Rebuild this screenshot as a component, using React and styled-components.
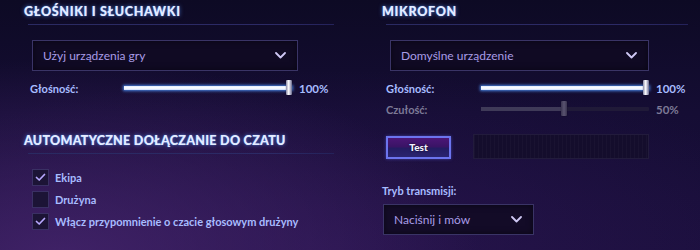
import React from "react";
import styled, { createGlobalStyle } from "styled-components";

const Global = createGlobalStyle`
  html, body { margin: 0; padding: 0; }
  body {
    width: 700px; height: 250px; overflow: hidden;
    font-family: Lato, "Open Sans", "Liberation Sans", sans-serif;
    background: #140d30;
  }
`;

const Page = styled.div`
  width: 700px;
  height: 250px;
  box-sizing: border-box;
  display: grid;
  grid-template-columns: 310px 306px;
  column-gap: 48px;
  padding-left: 24px;
  background:
    radial-gradient(ellipse 420px 200px at 60px 260px, rgba(72, 38, 112, 0.8), rgba(72, 38, 112, 0) 100%),
    radial-gradient(ellipse 500px 180px at 330px 250px, rgba(50, 24, 90, 0.55), rgba(50, 24, 90, 0) 100%),
    linear-gradient(to bottom, #0d0a24 0%, #150d34 45%, #1a0f3c 100%);
`;

const Column = styled.div`
  display: flex;
  flex-direction: column;
  align-items: flex-start;
`;

const Title = styled.h2`
  margin: ${(p) => p.$top || 0}px 0 0;
  font-size: 12.5px;
  font-weight: 900;
  letter-spacing: ${(p) => p.$spacing || 0}px;
  line-height: 24px;
  height: 24px;
  color: #e4ecff;
  text-transform: uppercase;
  text-shadow: 0 0 4px rgba(90, 150, 255, 0.75), 0 0 1px rgba(120, 170, 255, 0.9);
  white-space: nowrap;
`;

const Divider = styled.div`
  align-self: stretch;
  margin-left: 4px;
  height: 1px;
  background: linear-gradient(to right, #2a2a62, #2c2a66 80%, #24225a);
`;

const Select = styled.div`
  box-sizing: border-box;
  margin: ${(p) => p.$top}px 0 0 ${(p) => p.$left}px;
  width: ${(p) => p.$w}px;
  height: 31px;
  padding: 0 11px 0 10px;
  display: flex;
  align-items: center;
  justify-content: space-between;
  background: rgba(16, 11, 34, 0.85);
  border: 1px solid #3a3466;
  box-shadow: inset 0 0 6px rgba(0, 0, 0, 0.5);
  color: #a89ce6;
  font-size: 12px;
`;

const Chevron = () => (
  <svg width="11" height="7" viewBox="0 0 11 7">
    <path d="M1 1 L5.5 5.5 L10 1" fill="none" stroke="#cfc8f4" strokeWidth="1.8" strokeLinecap="round" strokeLinejoin="round" />
  </svg>
);

const SliderRow = styled.div`
  margin: ${(p) => p.$top}px 0 0 ${(p) => p.$left}px;
  height: 18px;
  display: flex;
  align-items: center;
`;

const Label = styled.span`
  width: ${(p) => p.$w || 94}px;
  font-size: 11px;
  font-weight: 700;
  color: ${(p) => (p.$dim ? "#7d7a96" : "#a8bcff")};
  white-space: nowrap;
`;

const Track = styled.div`
  position: relative;
  width: 168px;
  height: 16px;
  display: flex;
  align-items: center;
`;

const Groove = styled.div`
  width: 100%;
  height: 4px;
  background: ${(p) => (p.$dim ? "#201a38" : "#1c2a6a")};
  border-radius: 1px;
  position: relative;
`;

const Fill = styled.div`
  height: 100%;
  background: ${(p) => (p.$dim ? "#3f3a58" : "linear-gradient(to bottom, #dfeaff, #ffffff 50%, #c8dbff)")};
  box-shadow: ${(p) => (p.$dim ? "none" : "0 0 3px 1px rgba(80, 150, 255, 0.85)")};
`;

const Thumb = styled.div`
  position: absolute;
  top: 0;
  width: 6px;
  height: 15px;
  margin-left: -7px;
  border-radius: 1px;
  background: ${(p) =>
    p.$dim
      ? "linear-gradient(to right, #3a3450, #5a5470 50%, #3a3450)"
      : "linear-gradient(to right, #8a8aa8, #ffffff 45%, #b8b8d0 70%, #6a6a88)"};
  box-shadow: 0 0 1px rgba(0, 0, 0, 0.8);
`;

const Value = styled.span`
  margin-left: 7px;
  font-size: 11.5px;
  font-weight: 700;
  color: ${(p) => (p.$dim ? "#7d7a96" : "#a8bcff")};
`;

const Slider = ({ label, value, dim, top, left, labelW }) => (
  <SliderRow $top={top} $left={left}>
    <Label $dim={dim} $w={labelW}>{label}</Label>
    <Track>
      <Groove $dim={dim}>
        <Fill $dim={dim} style={{ width: `${value}%` }} />
      </Groove>
      <Thumb $dim={dim} style={{ left: `calc(${value}% + ${value === 100 ? 1 : 3}px)` }} />
    </Track>
    <Value $dim={dim}>{value}%</Value>
  </SliderRow>
);

const Checks = styled.div`
  margin: 15px 0 0 8px;
  display: flex;
  flex-direction: column;
  gap: 5px;
`;

const CheckRow = styled.div`
  display: flex;
  align-items: center;
  gap: 6px;
  height: 17px;
`;

const Box = styled.div`
  box-sizing: border-box;
  width: 17px;
  height: 17px;
  display: flex;
  align-items: center;
  justify-content: center;
  background: #1c1436;
  border: 1px solid #3a3064;
`;

const CheckText = styled.span`
  font-size: 11px;
  font-weight: 700;
  color: #a8bcff;
  white-space: nowrap;
`;

const Check = ({ on, children }) => (
  <CheckRow>
    <Box>
      {on && (
        <svg width="11" height="9" viewBox="0 0 11 9">
          <path d="M1.5 4.5 L4.2 7 L9.5 1.5" fill="none" stroke="#b8a8ff" strokeWidth="1.7" strokeLinecap="round" strokeLinejoin="round" />
        </svg>
      )}
    </Box>
    <CheckText>{children}</CheckText>
  </CheckRow>
);

const TestRow = styled.div`
  margin: 17px 0 0 4px;
  display: flex;
  align-items: center;
  gap: 22px;
`;

const TestButton = styled.button`
  box-sizing: border-box;
  width: 65px;
  height: 23px;
  border: 2px solid #6c74ee;
  background: linear-gradient(to bottom, #4c1676 0%, #3a1466 45%, #241c62 55%, #2a2470 100%);
  color: #f2f0ff;
  font-family: inherit;
  font-size: 10px;
  font-weight: 900;
  text-shadow: 0 0 2px rgba(0, 0, 0, 0.8);
  box-shadow: 0 0 3px rgba(100, 110, 255, 0.5);
  padding: 0;
`;

const Meter = styled.div`
  box-sizing: border-box;
  width: 176px;
  height: 25px;
  margin-top: -1px;
  border: 1px solid #221b3c;
  background:
    repeating-linear-gradient(to right, rgba(255, 255, 255, 0.025) 0 1px, transparent 1px 4px),
    #140d2c;
`;

const SubLabel = styled.div`
  margin: 24px 0 0 0;
  font-size: 11px;
  font-weight: 700;
  color: #a8bcff;
  line-height: 16px;
`;

export default function App() {
  return (
    <>
      <Global />
      <Page>
        <Column>
          <Title $spacing={0.7}>Głośniki i słuchawki</Title>
          <Divider />
          <Select $top={15} $left={8} $w={266}>
            <span>Użyj urządzenia gry</span>
            <Chevron />
          </Select>
          <Slider label="Głośność:" value={100} top={8} left={6} labelW={94} />
          <Title $top={32} $spacing={0.3}>Automatyczne dołączanie do czatu</Title>
          <Divider />
          <Checks>
            <Check on>Ekipa</Check>
            <Check>Drużyna</Check>
            <Check on>Włącz przypomnienie o czacie głosowym drużyny</Check>
          </Checks>
        </Column>
        <Column>
          <Title $spacing={0.7}>Mikrofon</Title>
          <Divider />
          <Select $top={15} $left={8} $w={259}>
            <span>Domyślne urządzenie</span>
            <Chevron />
          </Select>
          <Slider label="Głośność:" value={100} top={8} left={4} labelW={95} />
          <Slider label="Czułość:" value={50} top={3} left={4} labelW={95} dim />
          <TestRow>
            <TestButton>Test</TestButton>
            <Meter />
          </TestRow>
          <SubLabel>Tryb transmisji:</SubLabel>
          <Select $top={5} $left={1} $w={151}>
            <span>Naciśnij i mów</span>
            <Chevron />
          </Select>
        </Column>
      </Page>
    </>
  );
}
